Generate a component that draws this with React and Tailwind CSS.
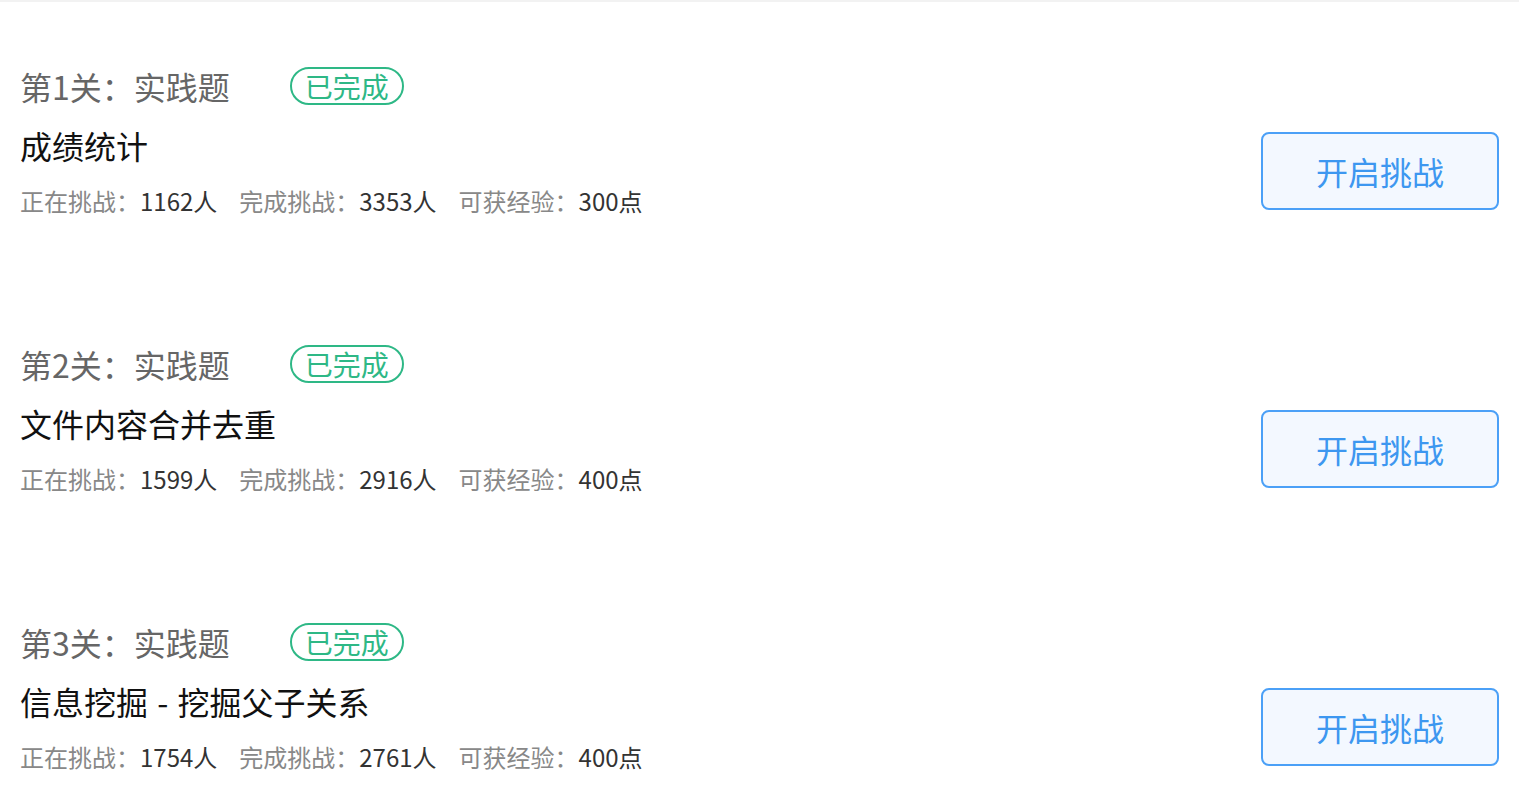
import React from 'react';

const levels = [
    { no: 1, title: '成绩统计', doing: 1162, done: 3353, exp: 300 },
    { no: 2, title: '文件内容合并去重', doing: 1599, done: 2916, exp: 400 },
    { no: 3, title: '信息挖掘 - 挖掘父子关系', doing: 1754, done: 2761, exp: 400 },
];

const Stat = ({ label, value }) => (
    <span className="mr-[22px]">
        <span className="text-[#888888]">{label}：</span>
        <span className="text-[#333333]">{value}</span>
    </span>
);

const LevelItem = ({ level }) => (
    <div className="flex items-start justify-between px-[20px] pt-[60px] pb-[61px]">
        <div>
            <div className="flex h-[48px] items-center">
                <span className="text-[32px] leading-[48px] text-[#666666]">
                    第{level.no}关：实践题
                </span>
                <span className="ml-[60px] flex h-[38px] items-center rounded-full border-2 border-[#2eb886] px-[13px] text-[28px] leading-[34px] text-[#2eb886]">
                    已完成
                </span>
            </div>
            <div className="mt-[11px] text-[32px] leading-[48px] text-[#111111] [word-spacing:2px]">
                {level.title}
            </div>
            <div className="mt-[14px] text-[24px] leading-[36px]">
                <Stat label="正在挑战" value={`${level.doing}人`} />
                <Stat label="完成挑战" value={`${level.done}人`} />
                <Stat label="可获经验" value={`${level.exp}点`} />
            </div>
        </div>
        <button
            type="button"
            className="mt-[70px] flex h-[78px] w-[238px] items-center justify-center rounded-[8px] border-2 border-[#4ba0f7] bg-[#f3f8ff] text-[32px] text-[#3d97f0]"
        >
            开启挑战
        </button>
    </div>
);

export default function App() {
    return (
        <div
            className="min-h-screen bg-white border-t-2 border-[#f2f2f2]"
            style={{ fontFamily: '"Noto Sans CJK SC", "Noto Sans", sans-serif' }}
        >
            {levels.map(level => (
                <LevelItem key={level.no} level={level} />
            ))}
        </div>
    );
}
